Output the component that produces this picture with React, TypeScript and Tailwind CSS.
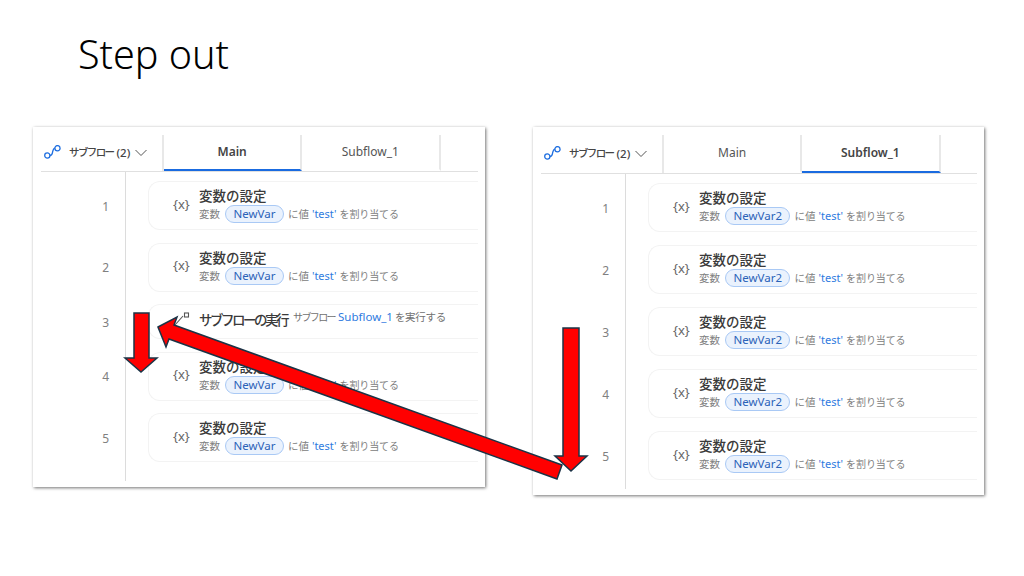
const FONT = "font-['Noto_Sans','Noto_Sans_CJK_JP',sans-serif]";

const SubflowIcon = () => (
   <svg width="18" height="16" viewBox="0 0 18 16" fill="none" stroke="#1f6fe0" strokeWidth="1.3">
      <circle cx="3.3" cy="10.5" r="2.6" />
      <circle cx="13.5" cy="3.200" r="2.6" />
      <path d="M5.900 10.500C8.500 10.500 8.200 8.500 8.700 6.500S9.600 3.200 10.900 3.200" />
   </svg>
);

const Chevron = () => (
   <svg width="12" height="8" viewBox="0 0 12 8" fill="none" stroke="#555" strokeWidth="1">
      <path d="M.5 1L6 6.500 11.500 1" />
   </svg>
);

const RunIcon = () => (
   <svg width="16" height="14" viewBox="0 0 16 14" fill="none" stroke="#555" strokeWidth="1.100">
      <path d="M1 13L9 4" />
      <rect x="10.500" y="1" width="4" height="4" />
   </svg>
);

const SetVarCard = ({ name }: { name: string }) => (
   <div className="h-[49px] flex items-center border border-r-0 border-[#f3f3f3] rounded-l-xl pl-[24px] whitespace-nowrap">
      <span className="w-[26px] mb-[2px] text-[13px] text-[#666]">{'{x}'}</span>
      <div className="flex flex-col">
         <span className="text-[13.500px] leading-[17px] font-medium text-[#3a3a3a]">変数の設定</span>
         <div className="flex items-center text-[10.500px] leading-[18px] text-[#808080]">
            <span>変数</span>
            <span className="ml-[5px] mr-[4px] h-[18px] px-[7.500px] flex items-center rounded-full border border-[#a9c9f5] bg-[#eaf2fd] text-[#2a62b8] text-[11.500px]">{name}</span>
            <span>に値</span>
            <span className="mx-[3px] text-[11px] text-[#2f7be0]">'test'</span>
            <span className="text-[10px] tracking-[-0.100px]">を割り当てる</span>
         </div>
      </div>
   </div>
);

const RunCard = () => (
   <div className="h-[35px] flex items-start pt-[4px] border border-r-0 border-[#f3f3f3] rounded-l-xl pl-[25px] whitespace-nowrap">
      <span className="w-[25px] pt-[3px]"><RunIcon /></span>
      <span className="mt-[1px] text-[13.500px] leading-[20px] font-medium tracking-[-2.500px] text-[#3a3a3a]">サブフローの実行</span>
      <span className="ml-[6px] text-[10px] leading-[16px] tracking-[-1.600px] text-[#707070]">サブフロー</span>
      <span className="ml-[3px] text-[11.500px] leading-[16px] text-[#2f7be0]">Subflow_1</span>
      <span className="ml-[2px] text-[10.500px] leading-[16px] tracking-[-0.300px] text-[#707070]">を実行する</span>
   </div>
);

const Tab = ({ label, active }: { label: string; active: boolean }) => (
   <div className={`w-[138.250px] flex items-center justify-center border-r-2 border-[#e8e8e8] text-[12px] border-b-[2.500px] ${active ? 'font-semibold text-[#444] border-b-[#1a6be0]' : 'text-[#555] border-b-transparent'}`}>
      {label}
   </div>
);

type PanelProps = {
   widthClass: string;
   heightClass: string;
   headerClass: string;
   bodyClass: string;
   gapClass: string;
   active: string;
   varName: string;
   withRun: boolean;
};

const Panel = ({ widthClass, heightClass, headerClass, bodyClass, gapClass, active, varName, withRun }: PanelProps) => (
   <section className={`${widthClass} ${heightClass} bg-white pt-[8px] px-[8px] shadow-[1px_1px_3px_rgba(0,0,0,0.55)]`}>
      <header className={`flex ${headerClass} border-b border-[#e0e0e0] mr-[-1px]`}>
         <div className="w-[123px] flex items-center pl-[3px] border-r-2 border-[#e8e8e8] font-medium text-[#444] whitespace-nowrap">
            <SubflowIcon />
            <span className="ml-[7px] text-[10.500px] tracking-[-1.600px]">サブフロー</span>
            <span className="ml-[3px] text-[11.500px]">(2)</span>
            <span className="ml-[5px]"><Chevron /></span>
         </div>
         <Tab label="Main" active={active === 'Main'} />
         <Tab label="Subflow_1" active={active === 'Subflow_1'} />
      </header>
      <div className={`flex ${bodyClass}`}>
         <ol className={`w-[85px] shrink-0 border-r border-[#dcdcdc] pt-[10px] pr-[16px] flex flex-col ${gapClass} text-[12px] text-[#808080]`}>
            {[1, 2, 3, 4, 5].map(n => (
               <li key={n} className={`flex items-center justify-end ${withRun && n === 3 ? 'h-[35px]' : 'h-[49px]'}`}>{n}</li>
            ))}
         </ol>
         <div className={`flex-1 pl-[22px] pt-[9px] flex flex-col ${gapClass} mr-[-1px]`}>
            {[1, 2, 3, 4, 5].map(n => (
               withRun && n === 3 ? <RunCard key={n} /> : <SetVarCard key={n} name={varName} />
            ))}
         </div>
      </div>
   </section>
);

const Arrows = () => (
   <svg className="absolute inset-0" width="1024" height="576" fill="#ff0000" stroke="#1b3346" strokeWidth="1.500">
      <polygon points="134,313 149,313 149,358 157,358 141,372 125,358 134,358" />
      <polygon points="563,328 579,328 579,456 587,456 571,471 555,456 563,456" />
      <polygon points="158,327 177,317 174,325 562,465 557,479 169,339 166,347" />
   </svg>
);

const App = () => {
   return (
      <main className={`relative w-[1024px] h-[576px] overflow-hidden bg-white ${FONT}`}>
         <h1 className="pl-[78px] pt-[27px] h-[127px] text-[39.500px] leading-[54px] font-light text-black">Step out</h1>
         <div className="flex items-start pl-[33px] gap-[48px]">
            <Panel widthClass="w-[452px]" heightClass="h-[360px]" headerClass="h-[37px]" bodyClass="h-[309px]" gapClass="gap-[12.500px]" active="Main" varName="NewVar" withRun />
            <Panel widthClass="w-[451px]" heightClass="h-[368px]" headerClass="h-[39px]" bodyClass="h-[315px]" gapClass="gap-[13px]" active="Subflow_1" varName="NewVar2" withRun={false} />
         </div>
         <Arrows />
      </main>
   );
};

export default App;
